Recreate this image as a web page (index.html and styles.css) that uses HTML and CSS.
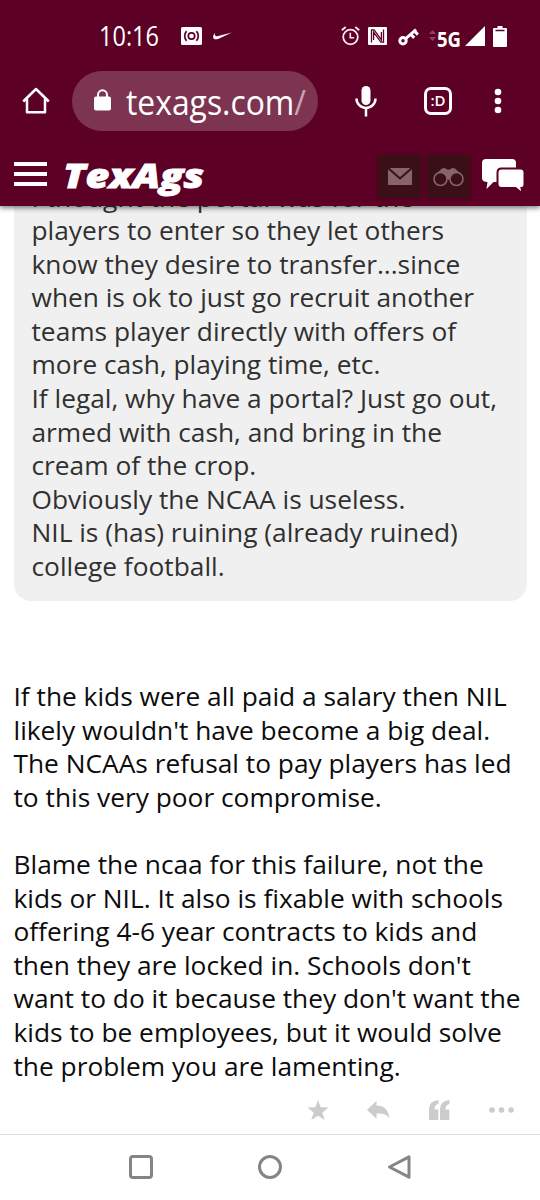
FILE: index.html
```
<!DOCTYPE html>
<html lang="en">
<head>
  <meta charset="UTF-8" />
  <meta name="viewport" content="width=device-width, initial-scale=1.0"/>
  <title>TexAgs</title>
  <link rel="stylesheet" href="styles.css">
</head>
<body>
<div class="phone">
  <header class="top">
    <!-- Status bar -->
    <div class="status-bar">
      <svg class="clock" width="62" height="30" viewBox="0 0 62 30"><text x="1" y="22.5" textLength="60" lengthAdjust="spacingAndGlyphs">10:16</text></svg>
      <svg class="cast" width="21" height="18" viewBox="0 0 21 18">
        <rect width="21" height="18" rx="1.5" fill="#fff"/>
        <g fill="none" stroke="#5c0025" stroke-width="1.7">
          <circle cx="10.5" cy="9" r="3.2"/>
          <path d="M5.6 4.2a7 7 0 0 0 0 9.6M15.400 4.200a7 7 0 0 1 0 9.600"/>
        </g>
      </svg>
      <svg class="swoosh" width="19" height="8" viewBox="0 0 19 8"><path d="M2.2.8C.4 2.8-.5 5 .6 6.4c1 1.3 3 1 5 .3L19 .4 5.2 4.1C2.6 4.8 1.1 3.5 2.2.8z" fill="#fff"/></svg>
      <svg class="alarm" width="19" height="20" viewBox="0 0 19 20" fill="none" stroke="#fde6f0">
        <circle cx="9.5" cy="11" r="7.3" stroke-width="1.8"/>
        <path d="M9.3 6.8v4.9h3.8" stroke-width="1.6"/>
        <path d="M.8 4.2 4.7.9M18.2 4.2 14.3.9" stroke-width="1.9"/>
      </svg>
      <svg class="nfc" width="19" height="18" viewBox="0 0 19 18">
        <rect width="19" height="18" rx="1" fill="#fff"/>
        <path d="M3.5 15.5V2.8h2.6l7.3 10V5M15.5 2.5v12.7h-2.6L5.6 5.2V13" fill="none" stroke="#5c0025" stroke-width="1.3"/>
      </svg>
      <svg class="key" width="21" height="18" viewBox="0 0 21 18" fill="none" stroke="#fff">
        <circle cx="5" cy="12.8" r="3.2" stroke-width="3"/>
        <path d="M7.5 10.8 18 1.5M12.8 6.3l3.4 3.6M16.4 3l3.5 3.6" stroke-width="3"/>
      </svg>
      <svg class="data" width="7" height="11" viewBox="0 0 7 11"><path d="M3.5 0 7 4H0zM3.5 11 0 7h7z" fill="#963f64"/></svg>
      <svg class="net" width="24" height="26" viewBox="0 0 24 26"><text x="0" y="20.5" textLength="24" lengthAdjust="spacingAndGlyphs">5G</text></svg>
      <svg class="signal" width="20" height="20" viewBox="0 0 20 20"><path d="M20 0v20H0z" fill="#fff"/></svg>
      <svg class="battery" width="14" height="21" viewBox="0 0 14 21">
        <path d="M4.5 0h5v2H13q1 0 1 1v17q0 1-1 1H1q-1 0-1-1V3q0-1 1-1h3.5z" fill="#fff"/>
        <path d="M2.5 4.5h9" stroke="#5c0025" stroke-width="1.5"/>
      </svg>
    </div>

    <!-- Browser toolbar -->
    <div class="toolbar">
      <svg class="home" width="28" height="28" viewBox="0 0 28 28" fill="none" stroke="#fff" stroke-width="2.5">
        <path d="M1.2 14.5 14 2l12.8 12.5M5 12v13.3h18V12" stroke-linejoin="round"/>
      </svg>
      <div class="url">
        <svg width="17" height="22" viewBox="0 0 17 22">
          <rect y="7.5" width="17" height="14" rx="2" fill="#fff"/>
          <path d="M4 9V5.8a4.5 4.5 0 0 1 9 0V9" fill="none" stroke="#fff" stroke-width="2"/>
        </svg>
        <svg class="address" width="184" height="56" viewBox="0 0 184 56">
          <text x="0" y="41.5" textLength="180" lengthAdjust="spacingAndGlyphs">texags.com<tspan class="slash">/</tspan></text>
        </svg>
      </div>
      <svg class="mic" width="22" height="31" viewBox="0 0 22 31">
        <rect x="6.5" y="0" width="9" height="19" rx="4.5" fill="#fff"/>
        <path d="M1.5 12.5a9.5 9.5 0 0 0 19 0M11 22v8.500" fill="none" stroke="#fff" stroke-width="2.5"/>
      </svg>
      <div class="tabs">:D</div>
      <svg class="menu" width="8" height="26" viewBox="0 0 8 26" fill="#fff">
        <circle cx="4" cy="4" r="3.3"/><circle cx="4" cy="13" r="3.3"/><circle cx="4" cy="22" r="3.3"/>
      </svg>
    </div>

    <!-- Site header -->
    <div class="site-bar">
      <div class="burger"><span></span><span></span><span></span></div>
      <svg class="logo" width="144" height="44" viewBox="0 0 144 44"><text x="-1" y="32.5" textLength="141" lengthAdjust="spacingAndGlyphs">TexAgs</text></svg>
      <div class="tile mail">
        <svg width="24" height="17" viewBox="0 0 24 17"><path d="M0 0h24v17H0z" fill="#87636a"/><path d="m0 0 12 10.5L24 0" fill="none" stroke="#3a0f18" stroke-width="2"/></svg>
      </div>
      <div class="tile">
        <svg width="31" height="20" viewBox="0 0 31 20">
          <path d="M4 6 9 1.5l3-.5 2 1.5h3L19 1l3 .5L27 6 20 9l-4.500 4L11 9z" fill="#87636a"/>
          <g fill="#3a0f18" stroke="#87636a" stroke-width="1.6"><circle cx="7.5" cy="12" r="6.5"/><circle cx="23.5" cy="12" r="6.5"/></g>
        </svg>
      </div>
      <svg class="chat" width="44" height="36" viewBox="0 0 44 36">
        <path d="M5 1h26q4 0 4 4v16q0 3-4 3H12.500L5.500 31l1-7Q1 24 1 20V5q0-4 4-4z" fill="#fff"/>
        <path d="M20.500 10.500h19q4 0 4 4v11.500q0 4-3 4l1 5.500-7-5.500h-14q-4 0-4-4V14.500q0-4 4-4z" fill="#fff" stroke="#5c0025" stroke-width="2"/>
      </svg>
    </div>
  </header>

  <main class="post">
    <blockquote class="quote">
      I thought the portal was for the<br>
      players to enter so they let others<br>
      know they desire to transfer...since<br>
      when is ok to just go recruit another<br>
      teams player directly with offers of<br>
      more cash, playing time, etc.<br>
      If legal, why have a portal? Just go out,<br>
      armed with cash, and bring in the<br>
      cream of the crop.<br>
      Obviously the NCAA is useless.<br>
      NIL is (has) ruining (already ruined)<br>
      college football.
    </blockquote>
    <div class="reply">
      If the kids were all paid a salary then NIL<br>
      likely wouldn't have become a big deal.<br>
      The NCAAs refusal to pay players has led<br>
      to this very poor compromise.<br>
      <br>
      Blame the ncaa for this failure, not the<br>
      kids or NIL. It also is fixable with schools<br>
      offering 4-6 year contracts to kids and<br>
      then they are locked in. Schools don't<br>
      want to do it because they don't want the<br>
      kids to be employees, but it would solve<br>
      the problem you are lamenting.
    </div>
    <div class="actions">
      <svg width="22" height="20" viewBox="0 0 22 20"><path d="m11 0 2.7 7.3 7.8.3-6.100 4.800 2.200 7.600L11 15.700 4.400 20l2.200-7.600L.5 7.600l7.800-.3z"/></svg>
      <svg width="23" height="18" viewBox="0 0 23 18"><path d="M0 8.800 9.500 0v4.500C17 4.500 21.500 9 22.500 17c-3-3.800-7-5-13-4.500V18z"/></svg>
      <svg width="21" height="20" viewBox="0 0 21 20"><path d="M9.500 0v4Q5.500 4.500 5.500 9.500h3.800V20H0V9Q0 1 9.500 0zM20.500 0v4q-4 .5-4 5.500h3.800V20H11V9q0-8 9.500-9z"/></svg>
      <svg class="more" width="25" height="6" viewBox="0 0 25 6"><circle cx="3" cy="3" r="2.8"/><circle cx="12.5" cy="3" r="2.8"/><circle cx="22" cy="3" r="2.8"/></svg>
    </div>
  </main>

  <!-- Android navigation -->
  <nav class="android-nav">
    <svg width="24" height="24" viewBox="0 0 24 24"><rect x="1.5" y="1.5" width="21" height="21" rx="2.5"/></svg>
    <svg width="24" height="24" viewBox="0 0 24 24"><circle cx="12" cy="12" r="10.5"/></svg>
    <svg width="24" height="24" viewBox="0 0 24 24"><path d="M22 1.800v20.400L2.500 12z"/></svg>
  </nav>
</div>
</body>
</html>
```
FILE: styles.css
```
:root {
  --maroon: #5c0025;
  --tile: #3a0f18;
  --quote: #f0f0f0;
}
* { box-sizing: border-box; padding: 0; margin: 0;}
body {
  background: #fff;
  font-family: "Open Sans", "Noto Sans", sans-serif;
  color: #0c0c0c;
}
svg { display: block; flex: none; overflow: visible;}
.phone { width: 540px; height: 1200px; overflow: hidden; display: flex; flex-direction: column;}

.top {
  position: relative; z-index: 1; flex: none;
  height: 206px; background: var(--maroon);
  box-shadow: 0 2px 5px rgba(0,0,0,0.5);
}
.status-bar { display: flex; align-items: flex-start; height: 60px; padding: 26px 0 0 98px;}
.clock { margin-top: -3px; font-size: 27px; fill: #fff;}
.cast { margin: 1px 0 0 21px;}
.swoosh { margin: 6px 0 0 11px;}
.alarm { margin-left: 109px;}
.nfc { margin: 1px 0 0 8px;}
.key { margin: 2px 0 0 11px;}
.data { margin: 4px 0 0 10px;}
.net { margin-left: 1px; font-size: 22px; font-weight: 700; fill: #fff;}
.signal { margin-left: 4px;}
.battery { margin-left: 8px;}

.toolbar { display: flex; align-items: center; height: 82px; padding-left: 22px;}
.url {
  display: flex; align-items: center;
  width: 246px; height: 60px; margin-left: 22px; padding-left: 22px;
  border-radius: 30px; background: #7d3451;
}
.url svg:first-child { margin-bottom: 3px;}
.address { margin-left: 15px; font-size: 34px; fill: #fff;}
.slash { fill: #c9a3b2;}
.mic { margin-left: 37px;}
.tabs {
  width: 28px; height: 28px; margin-left: 47px;
  border: 3px solid #fff; border-radius: 7px;
  color: #fff; font-size: 15px; line-height: 21px; text-align: center; font-weight: 600;
}
.menu { margin-left: 42px;}

.site-bar { display: flex; align-items: center; height: 64px; padding: 3px 0 0 14px;}
.burger { display: flex; flex-direction: column; gap: 6px; width: 33px; margin-bottom: 4px;}
.burger span { height: 4px; background: #fff;}
.logo {
  margin: 2px 0 0 17px;
  font-size: 33px; font-style: italic; font-weight: 800;
  fill: #fff; stroke: #fff; stroke-width: .9px;
}
.tile {
  display: flex; align-items: center; justify-content: center;
  width: 43px; height: 43px; margin: 2px 0 0 6px; background: var(--tile);
  box-shadow: 0 0 3px var(--tile);
}
.mail { margin-left: 170px;}
.chat { margin-left: 11px;}

.post { flex: none; height: 968px; margin-top: -40px; padding: 0 13.5px; font-size: 26.3px; line-height: 33.6px; white-space: nowrap;}
.quote {
  height: 434.5px; padding: 14.5px 18px 0;
  border-radius: 17px; background: var(--quote); color: #303030;
}
.reply { height: 481.5px; padding-top: 79.5px;}
.actions {
  display: flex; align-items: center; justify-content: flex-end; gap: 38.5px;
  height: 55px; padding-right: 12.5px; fill: #ccc;
}
.more { margin-left: 1px;}

.android-nav {
  display: flex; align-items: center; justify-content: center; gap: 105px;
  height: 66px; padding-bottom: 1px; border-top: 1px solid #ddd;
  fill: none; stroke: #858585; stroke-width: 3; stroke-linejoin: round;
}
```
